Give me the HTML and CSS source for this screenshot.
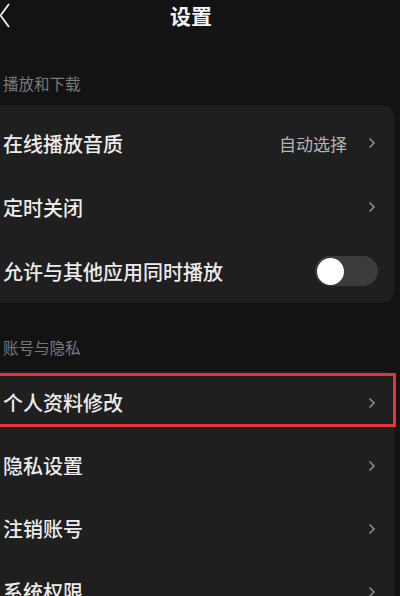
FILE: index.html
```html
<!DOCTYPE html>
<html lang="zh-CN">
<head>
<meta charset="utf-8">
<title>设置</title>
<link rel="stylesheet" href="styles.css">
</head>
<body>
<div class="page">
  <header class="header">
    <svg class="back" width="12" height="26" viewBox="0 0 12 26"><polyline points="9,2 0.5,13.5 9,25" fill="none" stroke="#f2f2f2" stroke-width="1.8"/></svg>
    <h1 class="title">设置</h1>
    <span class="spacer"></span>
  </header>

  <div class="section-title s1">播放和下载</div>
  <div class="card c1">
    <div class="row">
      <span class="label">在线播放音质</span>
      <span class="right"><span class="value">自动选择</span><svg class="chev" width="8" height="12" viewBox="0 0 8 12"><polyline points="1.5,1.5 6,6 1.5,10.5" fill="none" stroke="#8c8c8c" stroke-width="1.6"/></svg></span>
    </div>
    <div class="row">
      <span class="label">定时关闭</span>
      <svg class="chev" width="8" height="12" viewBox="0 0 8 12"><polyline points="1.5,1.5 6,6 1.5,10.5" fill="none" stroke="#8c8c8c" stroke-width="1.6"/></svg>
    </div>
    <div class="row">
      <span class="label">允许与其他应用同时播放</span>
      <span class="toggle"><span class="knob"></span></span>
    </div>
  </div>

  <div class="section-title s2">账号与隐私</div>
  <div class="card c2">
    <div class="highlight"></div>
    <div class="row r2">
      <span class="label">个人资料修改</span>
      <svg class="chev" width="8" height="12" viewBox="0 0 8 12"><polyline points="1.5,1.5 6,6 1.5,10.5" fill="none" stroke="#8c8c8c" stroke-width="1.6"/></svg>
    </div>
    <div class="row r2">
      <span class="label">隐私设置</span>
      <svg class="chev" width="8" height="12" viewBox="0 0 8 12"><polyline points="1.5,1.5 6,6 1.5,10.5" fill="none" stroke="#8c8c8c" stroke-width="1.6"/></svg>
    </div>
    <div class="row r2">
      <span class="label">注销账号</span>
      <svg class="chev" width="8" height="12" viewBox="0 0 8 12"><polyline points="1.5,1.5 6,6 1.5,10.5" fill="none" stroke="#8c8c8c" stroke-width="1.6"/></svg>
    </div>
    <div class="row r2">
      <span class="label">系统权限</span>
      <svg class="chev" width="8" height="12" viewBox="0 0 8 12"><polyline points="1.5,1.5 6,6 1.5,10.5" fill="none" stroke="#8c8c8c" stroke-width="1.6"/></svg>
    </div>
  </div>
</div>
</body>
</html>
```
FILE: styles.css
```css
html, body {
  margin: 0;
  padding: 0;
  background: #131313;
}
body {
  width: 400px;
  height: 596px;
  overflow: hidden;
  font-family: "Noto Sans CJK SC", "Noto Sans", sans-serif;
  color: #ededed;
}
.page {
  display: flex;
  flex-direction: column;
}
.header {
  height: 34px;
  display: grid;
  grid-template-columns: 1fr auto 1fr;
  align-items: center;
  padding-right: 18px;
}
.back {
  display: block;
  margin-top: -4px;
}
.title {
  margin: 0;
  font-size: 21px;
  font-weight: 700;
  line-height: 30px;
  color: #f4f4f4;
  margin-top: -4px;
}
.section-title {
  display: flex;
  align-items: flex-end;
  padding-left: 3px;
  font-size: 15.5px;
  line-height: 22px;
  color: #7a7a7a;
  box-sizing: border-box;
}
.s1 {
  height: 71px;
  padding-bottom: 11px;
}
.s2 {
  height: 68px;
  padding-bottom: 13px;
}
.card {
  background: #1f1f1f;
  margin-right: 6px;
  border-radius: 0 12px 12px 0;
  position: relative;
}
.c1 {
  padding-top: 6px;
}
.c2 {
  border-radius: 0 12px 0 0;
}
.row {
  height: 64px;
  display: flex;
  align-items: center;
  justify-content: space-between;
  padding-left: 3px;
  padding-right: 18px;
}
.r2 {
  height: 63px;
}
.label {
  font-size: 20px;
  font-weight: 500;
  color: #ececec;
}
.right {
  display: flex;
  align-items: center;
  gap: 21px;
}
.value {
  font-size: 17px;
  color: #b3b3b3;
}
.chev {
  display: block;
}
.toggle {
  width: 63px;
  height: 30px;
  border-radius: 15px;
  background: #3b3b3b;
  margin-right: -2px;
  display: flex;
  align-items: center;
  padding-left: 2px;
  box-sizing: border-box;
}
.knob {
  width: 27px;
  height: 27px;
  border-radius: 50%;
  background: #ffffff;
}
.highlight {
  position: absolute;
  top: 2px;
  left: -4px;
  width: 400px;
  height: 54px;
  border: 3px solid #e5333d;
  box-sizing: border-box;
  pointer-events: none;
}
```
